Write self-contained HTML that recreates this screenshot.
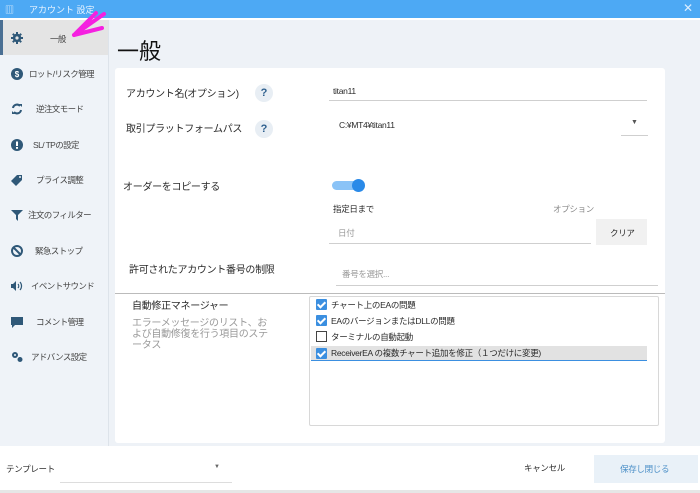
<!DOCTYPE html>
<html><head><meta charset="utf-8"><style>
*{margin:0;padding:0;box-sizing:border-box}
body{width:700px;height:493px;overflow:hidden;background:#eef2f7;font-family:"Liberation Sans","Noto Sans CJK JP",sans-serif;color:#2a2a2a;position:relative}
.a{position:absolute;white-space:nowrap}
.t{font-size:10px;letter-spacing:-0.3px}
.s{font-size:8.5px;letter-spacing:-0.3px}
.side .it{position:absolute;left:0;width:108px;height:35px}
.side .ic{position:absolute;left:11px;top:12px;width:12px;height:12px}
.side .lb{position:absolute;font-size:8.5px;color:#444;top:12px;letter-spacing:-0.6px}
.ul{position:absolute;height:1px;background:#cfcfcf}
.cb{position:absolute;width:11px;height:11px;background:#3b8fe0;border-radius:1px}
.cb:after{content:"";position:absolute;left:3px;top:1px;width:3px;height:6px;border:solid #fff;border-width:0 2px 2px 0;transform:rotate(45deg)}
.q{position:absolute;width:18px;height:18px;border-radius:50%;background:#e8eef4;color:#2d5f8e;font-size:11px;font-weight:bold;text-align:center;line-height:18px}
</style></head><body>
<div class="a" style="left:0;top:0;width:700px;height:18px;background:#4da9f4"></div>
<div class="a" style="left:5px;top:3px;font-size:9px;color:#dfeefc">▥</div>
<div class="a" style="left:29px;top:3px;font-size:9px;color:#eaf4ff">アカウント 設定</div>
<div class="a" style="left:683px;top:1px;font-size:12px;color:#dbeeff">✕</div>
<div class="a" style="left:0;top:18px;width:700px;height:2px;background:#fff"></div>

<div class="side">
<div class="a" style="left:0;top:20px;width:108px;height:427px;background:#eff3f8"></div>
<div class="a" style="left:108px;top:20px;width:1px;height:427px;background:#dde3ea"></div>
<div class="it" style="top:20px;background:#e4e4e4"><div class="a" style="left:0;top:0;width:3px;height:35px;background:#4a6f93"></div>
<svg class="ic" viewBox="0 0 12 12"><circle cx="6" cy="6" r="4.2" fill="#2f5878"/><g stroke="#2f5878" stroke-width="2"><path d="M6 0v12M0 6h12M1.8 1.8l8.4 8.4M10.2 1.8l-8.4 8.4"/></g><circle cx="6" cy="6" r="1.6" fill="#e4e4e4"/></svg>
<div class="lb" style="left:50px;top:13px">一般</div></div>
<svg class="a" style="left:70px;top:10px" width="38" height="30" viewBox="0 0 38 30"><path d="M4 25 L34 4 M4 25 L32 18 M4 25 L26 3" stroke="#f520e0" stroke-width="4" stroke-linecap="round" fill="none"/></svg>
<div class="it" style="top:56px"><svg class="ic" viewBox="0 0 12 12"><circle cx="6" cy="6" r="6" fill="#2f5878"/><text x="6" y="9" font-size="8" fill="#fff" text-anchor="middle" font-weight="bold" font-family="Liberation Sans">$</text></svg><div class="lb" style="left:29px">ロット/リスク管理</div></div>
<div class="it" style="top:91px"><svg class="ic" viewBox="0 0 12 12"><path d="M2 5a4 4 0 0 1 7-2M10 7a4 4 0 0 1-7 2" stroke="#2f5878" stroke-width="2" fill="none"/><path d="M8 1h3v3zM4 11H1V8z" fill="#2f5878"/></svg><div class="lb" style="left:36px">逆注文モード</div></div>
<div class="it" style="top:127px"><svg class="ic" viewBox="0 0 12 12"><circle cx="6" cy="6" r="6" fill="#2f5878"/><rect x="5" y="2.5" width="2" height="4.5" fill="#fff"/><rect x="5" y="8" width="2" height="1.8" fill="#fff"/></svg><div class="lb" style="left:33px">SL/ TPの設定</div></div>
<div class="it" style="top:162px"><svg class="ic" viewBox="0 0 12 12"><path d="M6 1h5v5l-6 6-5-5z" fill="#2f5878"/><circle cx="9" cy="3" r="1" fill="#eff3f8"/></svg><div class="lb" style="left:36px">プライス調整</div></div>
<div class="it" style="top:197px"><svg class="ic" viewBox="0 0 12 12"><path d="M0 1h12L7 6v6L5 10V6z" fill="#2f5878"/></svg><div class="lb" style="left:28px">注文のフィルター</div></div>
<div class="it" style="top:233px"><svg class="ic" viewBox="0 0 12 12"><circle cx="6" cy="6" r="5" stroke="#2f5878" stroke-width="2" fill="none"/><path d="M2.5 2.5l7 7" stroke="#2f5878" stroke-width="2"/></svg><div class="lb" style="left:35px">緊急ストップ</div></div>
<div class="it" style="top:268px"><svg class="ic" viewBox="0 0 12 12"><path d="M0 4h2l3-3v10L2 8H0z" fill="#2f5878"/><path d="M7 4a3 3 0 0 1 0 4M9 2a6 6 0 0 1 0 8" stroke="#2f5878" stroke-width="1.2" fill="none"/></svg><div class="lb" style="left:31px">イベントサウンド</div></div>
<div class="it" style="top:304px"><svg class="ic" viewBox="0 0 12 12"><path d="M0 1h12v8H4l-3 3V9H0z" fill="#2f5878"/></svg><div class="lb" style="left:36px">コメント管理</div></div>
<div class="it" style="top:339px"><svg class="ic" viewBox="0 0 12 12"><circle cx="4" cy="4" r="3" fill="#2f5878"/><circle cx="9" cy="8.5" r="2.5" fill="#2f5878"/><circle cx="4" cy="4" r="1" fill="#eff3f8"/></svg><div class="lb" style="left:31px">アドバンス設定</div></div>
</div>

<div class="a" style="left:117px;top:34px;font-size:22px;color:#111">一般</div>
<div class="a" style="left:115px;top:68px;width:550px;height:375px;background:#fff;border-radius:3px"></div>

<div class="a t" style="left:126px;top:85px">アカウント名(オプション)</div>
<div class="q" style="left:255px;top:84px">?</div>
<div class="a s" style="left:333px;top:86px">titan11</div>
<div class="ul" style="left:329px;top:100px;width:318px"></div>

<div class="a t" style="left:126px;top:120px">取引プラットフォームパス</div>
<div class="q" style="left:255px;top:120px">?</div>
<div class="a s" style="left:339px;top:120px">C:¥MT4¥titan11</div>
<div class="a" style="left:631px;top:119px;font-size:7px;color:#555">▼</div>
<div class="ul" style="left:621px;top:135px;width:27px"></div>

<div class="a t" style="left:123px;top:178px">オーダーをコピーする</div>
<div class="a" style="left:332px;top:181px;width:30px;height:9px;border-radius:5px;background:#8ac3f7"></div>
<div class="a" style="left:352px;top:179px;width:13px;height:13px;border-radius:50%;background:#2a8ae8"></div>
<div class="a s" style="left:333px;top:203px">指定日まで</div>
<div class="a s" style="left:553px;top:203px;color:#888">オプション</div>
<div class="a s" style="left:338px;top:227px;color:#999">日付</div>
<div class="ul" style="left:329px;top:243px;width:262px"></div>
<div class="a" style="left:596px;top:219px;width:51px;height:26px;background:#f1f1f1"></div>
<div class="a s" style="left:610px;top:227px">クリア</div>

<div class="a t" style="left:129px;top:261px">許可されたアカウント番号の制限</div>
<div class="a s" style="left:342px;top:268px;color:#999">番号を選択...</div>
<div class="ul" style="left:336px;top:285px;width:322px"></div>

<div class="a" style="left:115px;top:293px;width:550px;height:1px;background:#bbb"></div>
<div class="a t" style="left:132px;top:297px">自動修正マネージャー</div>
<div class="a" style="left:132px;top:318px;font-size:10px;color:#999;line-height:11px;white-space:normal;width:140px;letter-spacing:-0.3px">エラーメッセージのリスト、および自動修復を行う項目のステータス</div>

<div class="a" style="left:309px;top:296px;width:350px;height:130px;border:1px solid #d8d8d8;border-radius:2px;background:#fff"></div>
<div class="a" style="left:311px;top:346px;width:336px;height:15px;background:#e2e2e2;border-bottom:1px solid #3b8fe0"></div>
<div class="cb" style="left:316px;top:299px"></div><div class="a s" style="left:331px;top:299px">チャート上のEAの問題</div>
<div class="cb" style="left:316px;top:315px"></div><div class="a s" style="left:331px;top:315px">EAのバージョンまたはDLLの問題</div>
<div class="a" style="left:316px;top:331px;width:11px;height:11px;border:1px solid #444"></div><div class="a s" style="left:331px;top:331px">ターミナルの自動起動</div>
<div class="cb" style="left:316px;top:348px"></div><div class="a s" style="left:331px;top:347px">ReceiverEA の複数チャート追加を修正（１つだけに変更)</div>

<div class="a" style="left:0;top:446px;width:700px;height:44px;background:#fff"></div>
<div class="a" style="left:0;top:490px;width:700px;height:3px;background:#e6e6e6"></div>
<div class="a s" style="left:6px;top:463px">テンプレート</div>
<div class="a" style="left:214px;top:464px;font-size:6px;color:#666">▼</div>
<div class="ul" style="left:60px;top:482px;width:172px;background:#ddd"></div>
<div class="a s" style="left:524px;top:462px">キャンセル</div>
<div class="a" style="left:594px;top:455px;width:104px;height:28px;background:#e9f1f8"></div>
<div class="a s" style="left:620px;top:463px;color:#4b8fc7">保存し閉じる</div>
</body></html>
